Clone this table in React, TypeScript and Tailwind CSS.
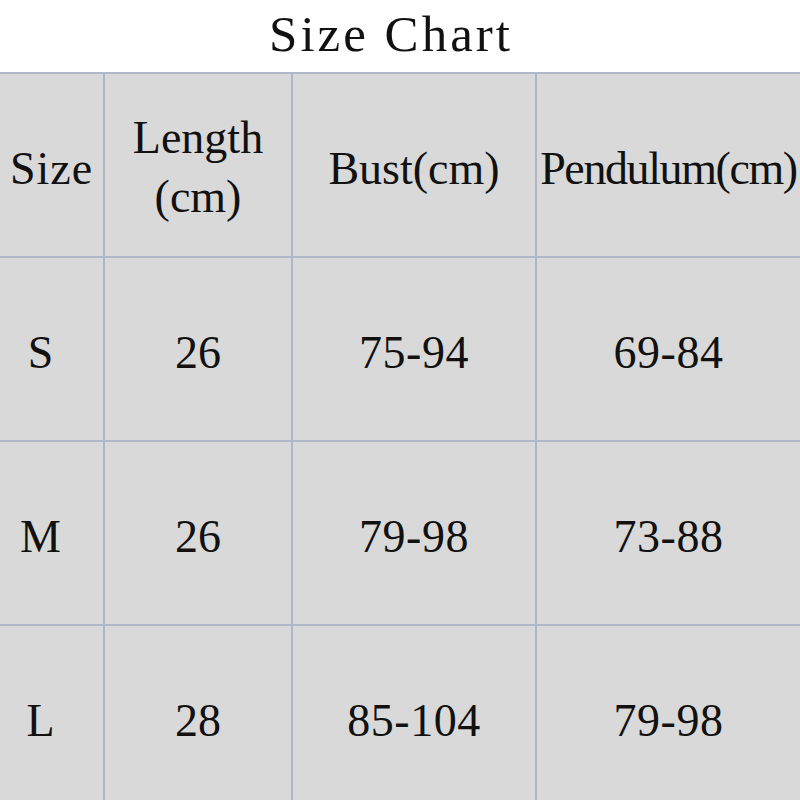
import React from "react";

const rows = [
  { size: "S", length: "26", bust: "75-94", pendulum: "69-84" },
  { size: "M", length: "26", bust: "79-98", pendulum: "73-88" },
  { size: "L", length: "28", bust: "85-104", pendulum: "79-98" },
];

const font = { fontFamily: '"Liberation Serif", "Times New Roman", serif' };

function Cell({ children, className = "" }: { children: React.ReactNode; className?: string }) {
  return (
    <div className={"bg-[#d9d9d9] flex items-center justify-center text-center text-[#111] " + className}>
      {children}
    </div>
  );
}

export default function App() {
  return (
    <div className="w-[800px] h-[800px] bg-white overflow-hidden" style={font}>
      <div className="h-[72px] flex items-center justify-center pr-[18px] pb-[4px]">
        <h1 className="text-[51px] leading-none tracking-[3px] text-[#111] font-normal">Size Chart</h1>
      </div>
      <div className="grid grid-cols-[103px_186px_242px_263px] grid-rows-[182px_182px_182px_182px_182px] gap-[2px] pt-[2px] bg-[#afb8c9]">
        <Cell className="text-[46px] tracking-[1px] pt-[6px]">Size</Cell>
        <Cell className="text-[46px] leading-[59px] flex-col pt-[4px]">
          <span>Length</span>
          <span>(cm)</span>
        </Cell>
        <Cell className="text-[46px] tracking-[0px] pt-[6px]">Bust(cm)</Cell>
        <Cell className="text-[46px] tracking-[-1.4px] pt-[6px]">Pendulum(cm)</Cell>

        {rows.map((r) => (
          <React.Fragment key={r.size}>
            <Cell className="text-[46px] pr-[22px] pt-[6px]">{r.size}</Cell>
            <Cell className="text-[46px] pt-[6px]">{r.length}</Cell>
            <Cell className="text-[46px] pt-[6px] tracking-[0.5px]">{r.bust}</Cell>
            <Cell className="text-[46px] pt-[6px] tracking-[0.5px]">{r.pendulum}</Cell>
          </React.Fragment>
        ))}
      </div>
    </div>
  );
}
